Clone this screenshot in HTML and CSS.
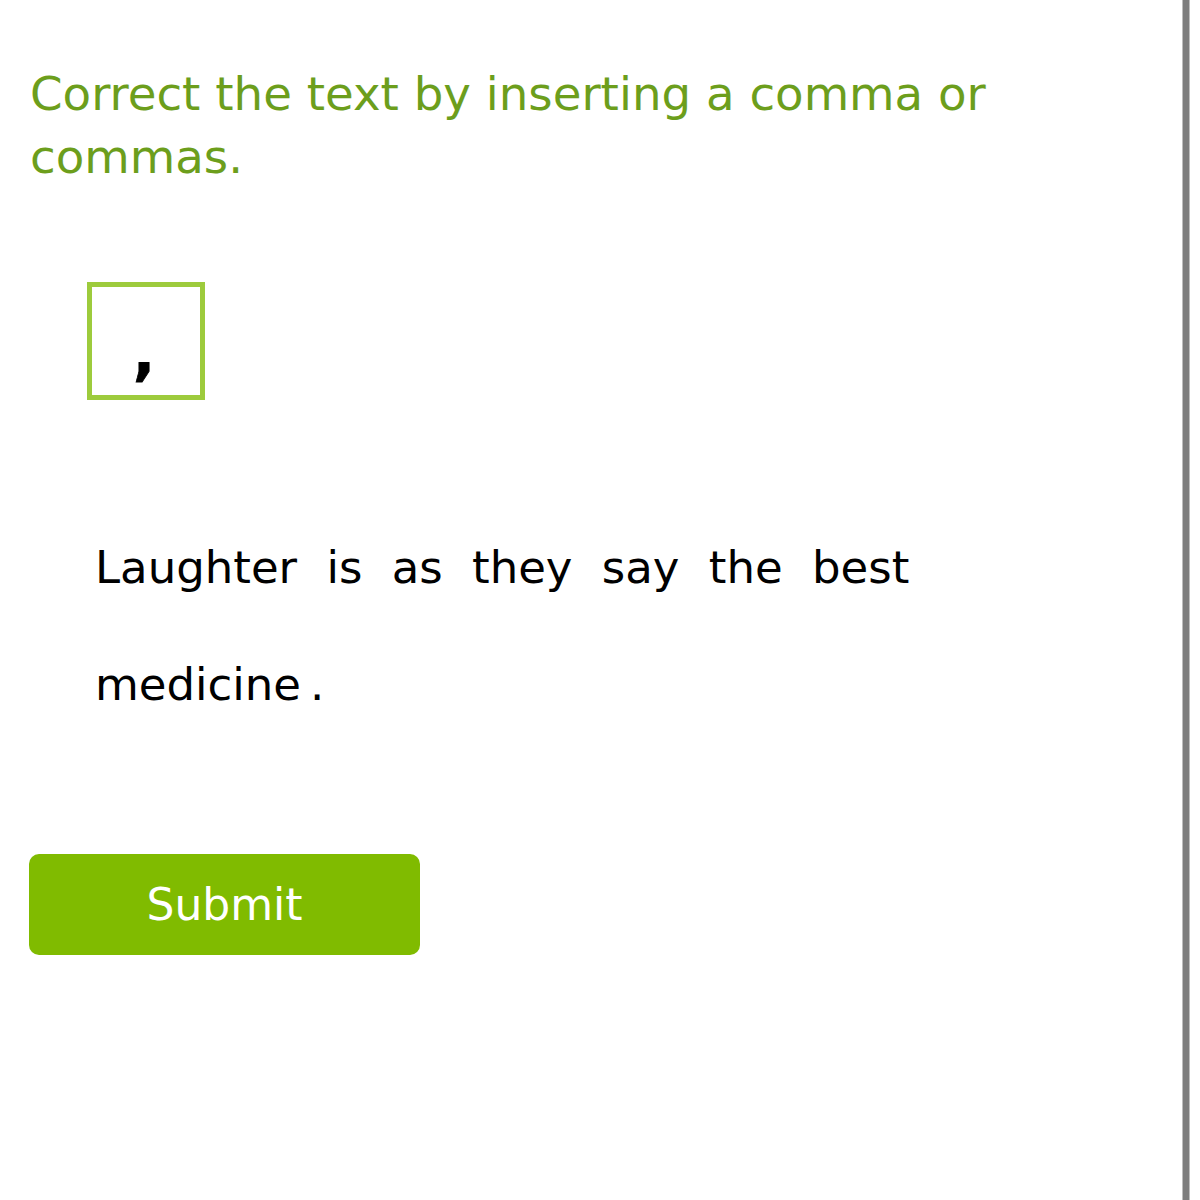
FILE: index.html
```html
<!DOCTYPE html>
<html lang="en">
<head>
<meta charset="utf-8">
<title>Comma exercise</title>
<link rel="stylesheet" href="styles.css">
</head>
<body>
<div class="page">
  <main class="content">
    <h1 class="prompt">Correct the text by inserting a comma or commas.</h1>
    <div class="tiles">
      <div class="tile"><span class="tile-mark">,</span></div>
    </div>
    <p class="sentence">
      <span class="word">Laughter</span>
      <span class="word">is</span>
      <span class="word">as</span>
      <span class="word">they</span>
      <span class="word">say</span>
      <span class="word">the</span>
      <span class="word">best</span>
      <span class="word last">medicine</span><span class="punct">.</span>
    </p>
    <button class="submit" type="button">Submit</button>
  </main>
  <div class="scrollbar"></div>
</div>
</body>
</html>
```

FILE: styles.css
```css
html, body {
  margin: 0;
  padding: 0;
  background: #ffffff;
}

body {
  font-family: "DejaVu Sans", Verdana, sans-serif;
}

.page {
  display: flex;
  height: 1200px;
  width: 1200px;
  overflow: hidden;
}

.content {
  flex: 0 0 1182px;
  box-sizing: border-box;
  padding: 63px 0 0 30px;
}

.scrollbar {
  flex: 0 0 8px;
  background: #7d7d7d;
  border-left: 1px solid #bdbdbd;
  border-right: 1px solid #bdbdbd;
  box-sizing: border-box;
}

.prompt {
  margin: 0;
  font-size: 46.7px;
  font-weight: normal;
  line-height: 63px;
  color: #6c9e1c;
  width: 1000px;
}

.tiles {
  display: flex;
  margin: 93px 0 0 57px;
}

.tile {
  width: 118px;
  height: 118px;
  box-sizing: border-box;
  border: 5px solid #9dcb3c;
  display: flex;
  justify-content: center;
  align-items: flex-start;
}

.tile-mark {
  font-weight: bold;
  font-size: 58px;
  line-height: 1;
  color: #000;
  margin-top: 38px;
  margin-right: 4px;
  -webkit-text-stroke: 0.8px #000;
}

.sentence {
  margin: 109px 0 0 65px;
  font-size: 45px;
  line-height: 117px;
  color: #000;
  width: 1000px;
}

.word {
  margin-right: 15px;
}

.word.last {
  margin-right: 9px;
}

.submit {
  display: block;
  margin: 111px 0 0 -1px;
  width: 391px;
  height: 101px;
  border: none;
  border-radius: 10px;
  background: #80bb00;
  color: #ffffff;
  font-family: "DejaVu Sans", Verdana, sans-serif;
  font-size: 44px;
  padding: 0;
}
```
